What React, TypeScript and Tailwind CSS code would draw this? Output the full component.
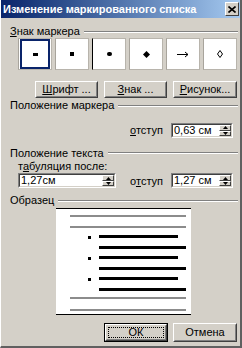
import React from "react";

const font = { fontFamily: '"Liberation Sans", Arial, sans-serif' };

function Raised({ children, className = "", w }: { children: React.ReactNode; className?: string; w: string }) {
  return (
    <div className={`${w} h-[17px] border border-t-white border-l-white border-r-[#404040] border-b-[#404040] ${className}`}>
      <div className="h-full border border-t-[#d4d0c8] border-l-[#d4d0c8] border-r-[#808080] border-b-[#808080] flex items-center justify-center">
        {children}
      </div>
    </div>
  );
}

function GroupHeader({ label, className = "" }: { label: React.ReactNode; className?: string }) {
  return (
    <div className={`flex items-center h-[13px] pl-[9px] pr-[2px] ${className}`}>
      <span className="leading-[13px] pr-[4px]">{label}</span>
      <div className="flex-1 flex flex-col">
        <div className="h-px bg-[#808080]" />
        <div className="h-px bg-white" />
      </div>
    </div>
  );
}

function Spin({ value, w }: { value: string; w: string }) {
  return (
    <div className={`${w} h-[15px] border border-t-[#808080] border-l-[#808080] border-r-white border-b-white`}>
      <div className="h-full border border-t-[#404040] border-l-[#404040] border-r-[#d4d0c8] border-b-[#d4d0c8] bg-white flex items-stretch">
        <span className="flex-1 pl-[1px] leading-[11px] whitespace-nowrap">{value}</span>
        <div className="w-[12px] flex flex-col">
          <div className="h-[6px] bg-[#d4d0c8] border border-t-white border-l-white border-r-[#404040] border-b-[#404040] flex items-center justify-center">
            <svg width="5" height="3" viewBox="0 0 5 3"><path d="M2.5 0 L5 3 L0 3 Z" fill="#000" /></svg>
          </div>
          <div className="h-[5px] bg-[#d4d0c8] border border-t-white border-l-white border-r-[#404040] border-b-[#404040] flex items-center justify-center">
            <svg width="5" height="3" viewBox="0 0 5 3"><path d="M0 0 L5 0 L2.5 3 Z" fill="#000" /></svg>
          </div>
        </div>
      </div>
    </div>
  );
}

function U({ children }: { children: React.ReactNode }) {
  return <span className="underline underline-offset-[1px]">{children}</span>;
}

function BulletBox({ children, selected, leftBlack }: { children: React.ReactNode; selected?: boolean; leftBlack?: boolean }) {
  return (
    <div
      className={`w-[34px] h-[32px] bg-white border ${leftBlack ? "border-l-black" : "border-l-[#a8a49c]"} border-t-[#b8b4ac] border-r-[#b8b4ac] border-b-[#b8b4ac] flex items-center justify-center`}
    >
      {selected ? (
        <div className="w-[30px] h-[30px] border-2 border-[#0a246a] flex items-center justify-center">{children}</div>
      ) : (
        children
      )}
    </div>
  );
}

function PLine({ w, gray, bullet, mt }: { w: string; gray?: boolean; bullet?: boolean; mt: string }) {
  return (
    <div className={`flex items-center ${mt} ${bullet ? "pl-[32px]" : gray ? "pl-[14px]" : "pl-[43px]"}`}>
      {bullet && <div className="w-[3px] h-[3px] bg-black mr-[8px] translate-y-[1px]" />}
      <div className={`${w} ${gray ? "h-[2px] bg-[#8c8c8c]" : "h-[3px] bg-black"}`} />
    </div>
  );
}

export default function App() {
  return (
    <div
      style={font}
      className="w-[242px] h-[348px] bg-[#d4d0c8] text-[11px] text-black border-l border-l-white border-r-2 border-r-[#606060] border-b-2 border-b-[#606060] flex flex-col overflow-hidden"
    >
      {/* title bar */}
      <div className="h-[18px] flex items-center pl-[2px] pr-[1px] bg-gradient-to-r from-[#0a246a] to-[#a6caf0]">
        <span className="flex-1 text-white font-bold text-[11px] leading-[13px] whitespace-nowrap">
          Изменение маркированного списка
        </span>
        <div className="w-[14px] h-[14px] bg-[#d4d0c8] border border-t-white border-l-white border-r-[#404040] border-b-[#404040] flex items-center justify-center">
          <svg width="8" height="7" viewBox="0 0 8 7">
            <path d="M0.5 0.5 L7.5 6.5 M7.5 0.5 L0.5 6.5" stroke="#000" strokeWidth="1.6" />
          </svg>
        </div>
      </div>

      <GroupHeader className="mt-[7px]" label={<><U>З</U>нак маркера</>} />

      <div className="flex gap-[3px] pl-[17px]">
        <BulletBox selected>
          <div className="w-[5px] h-[3px] bg-black" />
        </BulletBox>
        <BulletBox>
          <div className="w-[4px] h-[4px] bg-black" />
        </BulletBox>
        <BulletBox leftBlack>
          <div className="w-[5px] h-[4px] rounded-[2px] bg-black" />
        </BulletBox>
        <BulletBox>
          <svg width="7" height="7" viewBox="0 0 7 7"><path d="M3.5 0 L7 3.5 L3.5 7 L0 3.5 Z" fill="#000" /></svg>
        </BulletBox>
        <BulletBox>
          <svg width="12" height="7" viewBox="0 0 12 7"><path d="M0 3.5 H11 M8 1 L11 3.5 L8 6" stroke="#000" strokeWidth="1" fill="none" /></svg>
        </BulletBox>
        <BulletBox>
          <svg width="6" height="8" viewBox="0 0 6 8"><path d="M3 0.5 L5.5 4 L3 7.5 L0.5 4 Z" stroke="#000" strokeWidth="1" fill="none" /></svg>
        </BulletBox>
      </div>

      <div className="flex justify-end gap-[6px] pr-[3px] mt-[11px]">
        <Raised w="w-[63px]"><span><U>Ш</U>рифт ...</span></Raised>
        <Raised w="w-[63px]"><span><U>З</U>нак ...</span></Raised>
        <Raised w="w-[64px]"><span><U>Р</U>исунок...</span></Raised>
      </div>

      <GroupHeader className="mt-[1px]" label="Положение маркера" />

      <div className="flex items-center justify-end pr-[7px] mt-[10px]">
        <span className="mr-[8px]"><U>о</U>тступ</span>
        <Spin w="w-[62px]" value="0,63 см" />
      </div>

      <GroupHeader className="mt-[8px]" label="Положение текста" />

      <div className="pl-[17px] leading-[13px]">
        т<U>а</U>буляция после:
      </div>

      <div className="flex items-center pl-[17px] pr-[7px]">
        <Spin w="w-[98px]" value="1,27см" />
        <span className="ml-auto mr-[8px]">о<U>т</U>ступ</span>
        <Spin w="w-[62px]" value="1,27 см" />
      </div>

      <GroupHeader className="mt-[5px]" label="Образец" />

      <div className="ml-[55px] mt-[1px] w-[135px] h-[107px] bg-white border-t border-b border-black flex flex-col">
        <PLine mt="mt-[6px]" gray w="w-[116px]" />
        <PLine mt="mt-[9px]" gray w="w-[116px]" />
        <PLine mt="mt-[7px]" bullet w="w-[79px]" />
        <PLine mt="mt-[8px]" w="w-[87px]" />
        <PLine mt="mt-[7px]" bullet w="w-[79px]" />
        <PLine mt="mt-[8px]" w="w-[87px]" />
        <PLine mt="mt-[7px]" bullet w="w-[79px]" />
        <PLine mt="mt-[8px]" w="w-[87px]" />
        <PLine mt="mt-[6px]" gray w="w-[116px]" />
        <PLine mt="mt-[10px]" gray w="w-[116px]" />
      </div>

      <div className="flex justify-end gap-[5px] pr-[3px] mt-[8px]">
        <div className="w-[64px] h-[19px] border border-black">
          <div className="h-full border border-t-white border-l-white border-r-[#404040] border-b-[#404040]">
            <div className="h-full border border-t-[#d4d0c8] border-l-[#d4d0c8] border-r-[#808080] border-b-[#808080] p-[1px]">
              <div className="h-full border border-dotted border-black flex items-center justify-center leading-[11px]">ОК</div>
            </div>
          </div>
        </div>
        <div className="w-[64px] h-[19px] border border-t-white border-l-white border-r-[#404040] border-b-[#404040]">
          <div className="h-full border border-t-[#d4d0c8] border-l-[#d4d0c8] border-r-[#808080] border-b-[#808080] flex items-center justify-center">
            Отмена
          </div>
        </div>
      </div>
    </div>
  );
}
